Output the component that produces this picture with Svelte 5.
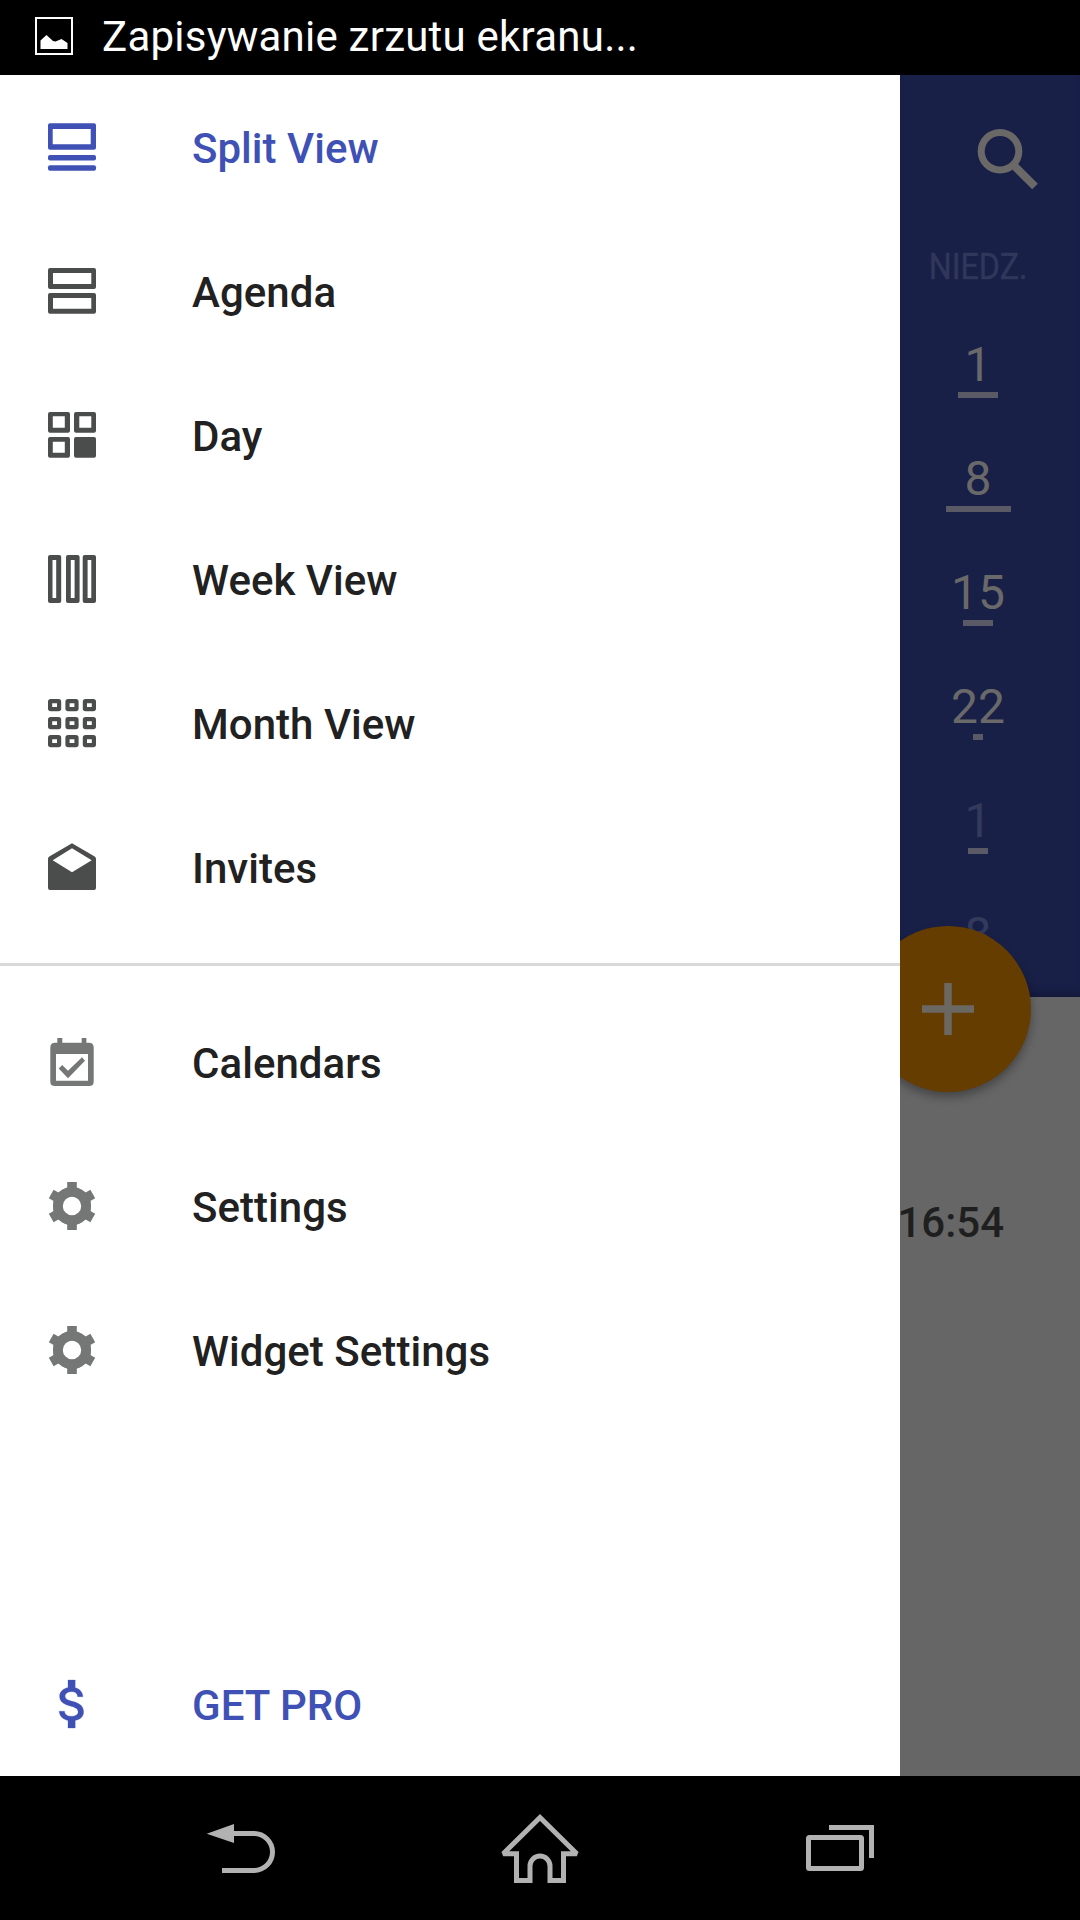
<script>
  const views = [
    { label: 'Split View', icon: 'split', active: true },
    { label: 'Agenda', icon: 'agenda' },
    { label: 'Day', icon: 'day' },
    { label: 'Week View', icon: 'week' },
    { label: 'Month View', icon: 'month' },
    { label: 'Invites', icon: 'invites' }
  ];
  const options = [
    { label: 'Calendars', icon: 'calendar' },
    { label: 'Settings', icon: 'gear' },
    { label: 'Widget Settings', icon: 'gear' }
  ];
  // load: width of the bar that shows how busy the day is
  const days = [
    { n: 1, load: 40 },
    { n: 8, load: 65 },
    { n: 15, load: 30 },
    { n: 22, load: 10 },
    { n: 1, load: 20, dim: true },
    { n: 8, load: 0, dim: true }
  ];
</script>

{#snippet glyph(name)}
  <svg class="icon" viewBox="0 0 72 72" fill="currentColor" fill-rule="evenodd">
    {#if name === 'split'}
      <path d="M14 12.3h44q2 0 2 2v22.4q0 2-2 2H14q-2 0-2-2V14.3q0-2 2-2zM16.7 18v15.3h38V18z" />
      <rect x="12" y="44" width="48" height="5.4" rx="2" />
      <rect x="12" y="54.2" width="48" height="5.6" rx="2" />
    {:else if name === 'agenda'}
      <path d="M14 13h44q2 0 2 2v17q0 2-2 2H14q-2 0-2-2V15q0-2 2-2zM17 18v11h38.3V18z" />
      <path d="M14 38h44q2 0 2 2v16.7q0 2-2 2H14q-2 0-2-2V40q0-2 2-2zM17 43v10.7h38.3V43z" />
    {:else if name === 'day'}
      <path d="M14 13h18q2 0 2 2v16.7q0 2-2 2H14q-2 0-2-2V15q0-2 2-2zM16.8 17.2v11.6h12V17.2z" />
      <path d="M40 13h18q2 0 2 2v16.7q0 2-2 2H40q-2 0-2-2V15q0-2 2-2zM43.3 17.2v11.6h12V17.2z" />
      <path d="M14 38h18q2 0 2 2v16.7q0 2-2 2H14q-2 0-2-2V40q0-2 2-2zM16.8 42.7v11h12v-11z" />
      <rect x="38" y="38" width="22" height="20.7" rx="2" />
    {:else if name === 'week'}
      <path d="M14 12h9.2q2 0 2 2v44q0 2-2 2H14q-2 0-2-2V14q0-2 2-2zM16.5 17v38h3.7V17z" />
      <path d="M32 12h9.6q2 0 2 2v44q0 2-2 2H32q-2 0-2-2V14q0-2 2-2zM34.8 17v38h3.8V17z" />
      <path d="M48.7 12H58q2 0 2 2v44q0 2-2 2h-9.3q-2 0-2-2V14q0-2 2-2zM51.6 17v38h3.7V17z" />
    {:else if name === 'month'}
      {#each [12, 30, 48] as y}
        {#each [12, 29.4, 46.8] as x}
          <rect x={x + 2.1} y={y + 2.1} width="9" height="8" rx=".6" fill="none" stroke="currentColor" stroke-width="4.2" stroke-linejoin="round" />
        {/each}
      {/each}
    {:else if name === 'invites'}
      <path d="M36 12.3L58.7 25.6q1.3.9 1.3 2.4v29q0 2-2 2H14q-2 0-2-2V28q0-1.5 1.3-2.4zM36 17.3L16.7 29.3 36 41.3l19.7-12z" />
    {:else if name === 'calendar'}
      <path d="M21.3 12h5v4.7h19.4V12h4.7v4.7H53q4.7 0 4.7 4.7v34q0 4.6-4.7 4.6H19q-4.7 0-4.7-4.6v-34q0-4.7 4.7-4.7h2.3zM20 28v26.7h32V28z" />
      <path d="M22.7 42.5l3.5-3.5 5.8 5.7 14-13.4 3 3.5L32 52.2z" />
    {:else if name === 'gear'}
      <circle cx="36" cy="36" r="14.1" fill="none" stroke="currentColor" stroke-width="9.8" />
      {#each [0, 60, 120, 180, 240, 300] as a}
        <path transform="rotate({a} 36 36)" d="M31.2 12h9.6v5.5l5 2.5-4 4H30.2l-4-4 5-2.5z" />
      {/each}
    {:else if name === 'dollar'}
      <g transform="translate(8 7.2) scale(2.4)" stroke="currentColor" stroke-width=".12">
        <path d="M11.8 10.9c-2.27-.59-3-1.2-3-2.15 0-1.09 1.01-1.85 2.7-1.85 1.78 0 2.44.85 2.5 2.1h2.21c-.07-1.72-1.12-3.3-3.21-3.81V2h-3v3.16c-1.94.42-3.5 1.68-3.5 3.61 0 2.31 1.91 3.46 4.7 4.13 2.5.6 3 1.48 3 2.41 0 .69-.49 1.79-2.7 1.79-2.06 0-2.87-.92-2.98-2.1h-2.2c.12 2.19 1.76 3.42 3.68 3.83V22h3v-3.15c1.95-.37 3.5-1.5 3.5-3.55 0-2.84-2.43-3.81-4.7-4.4z" />
      </g>
    {/if}
  </svg>
{/snippet}

{#snippet row(item)}
  <li class="row" class:active={item.active}>
    {@render glyph(item.icon)}
    <span class="label">{item.label}</span>
  </li>
{/snippet}

<div class="screen">
  <header class="status">
    <svg class="picture" viewBox="0 0 38 38">
      <rect x="1" y="1" width="36" height="36" fill="none" stroke="#fff" stroke-width="2" />
      <path d="M5.5 32v-8.5l6-5.5 6.5 6 2.5.5 6-2.500 6 4V32z" fill="#fff" />
    </svg>
    <span class="notice">Zapisywanie zrzutu ekranu...</span>
  </header>

  <main>
    <nav class="drawer">
      <ul>
        {#each views as item}{@render row(item)}{/each}
      </ul>
      <hr />
      <ul>
        {#each options as item}{@render row(item)}{/each}
      </ul>
      <ul class="bottom">
        {@render row({ label: 'GET PRO', icon: 'dollar', active: true })}
      </ul>
    </nav>

    <section class="behind">
      <div class="month">
        <svg class="search" viewBox="0 0 62 62">
          <circle cx="23" cy="23.3" r="18.8" fill="none" stroke="#6a6968" stroke-width="7" />
          <path d="M37.5 38L58 58.5" fill="none" stroke="#6a6968" stroke-width="8" />
        </svg>
        <div class="weekday"><span>NIEDZ.</span></div>
        {#each days as day}
          <div class="day" class:dim={day.dim}>
            <span>{day.n}</span>
            <i style:width="{day.load}px"></i>
          </div>
        {/each}
      </div>
      <div class="events"><span>16:54</span></div>
      <div class="fab">
        <svg viewBox="0 0 52 52"><path d="M0 26h52M26 0v52" stroke="#6b6762" stroke-width="7.5" /></svg>
      </div>
    </section>
  </main>

  <footer class="keys">
    <svg viewBox="0 0 80 80">
      <path d="M6.7 37.7L34 28v19z" fill="#b2b2b2" />
      <path d="M33 37.5h21a18.5 18.5 0 0 1 0 37H22" />
    </svg>
    <svg viewBox="0 0 80 80">
      <path d="M40 21.5L3.2 57.8h13.3v26.7H30V70a10 10 0 0 1 20 0v14.5h13.5V57.8h13.3z" />
    </svg>
    <svg viewBox="0 0 80 80">
      <rect x="8.5" y="41.5" width="53" height="31" rx="1" />
      <path d="M29 31.5h42.5V62" />
    </svg>
  </footer>
</div>

<style>
  :global(body) {
    margin: 0;
    background: #000;
  }
  .screen {
    width: 1080px;
    height: 1920px;
    display: flex;
    flex-direction: column;
    overflow: hidden;
    background: #000;
    font-family: Roboto, 'Noto Sans', sans-serif;
  }
  .status {
    height: 75px;
    display: flex;
    align-items: center;
    padding: 0 0 3px 35px;
    box-sizing: border-box;
    color: #fff;
  }
  .picture {
    width: 38px;
    height: 38px;
  }
  .notice {
    margin-left: 29px;
    font-size: 42px;
    letter-spacing: 0.23px;
    white-space: nowrap;
  }
  main {
    height: 1701px;
    display: flex;
  }
  .drawer {
    width: 900px;
    display: flex;
    flex-direction: column;
    background: #fff;
  }
  ul {
    margin: 0;
    padding: 0;
    list-style: none;
  }
  .bottom {
    margin-top: auto;
  }
  hr {
    width: 100%;
    height: 3px;
    margin: 24px 0;
    border: 0;
    background: #d9d9d9;
  }
  .row {
    height: 144px;
    display: flex;
    align-items: center;
    gap: 84px;
    padding-left: 36px;
    color: #4b4d4c;
  }
  hr + ul .row {
    color: #757776;
  }
  .icon {
    width: 72px;
    height: 72px;
    flex: none;
  }
  .row .label {
    padding-top: 3px;
    font-size: 42px;
    font-weight: 500;
    letter-spacing: 0.04px;
    color: #212121;
  }
  .row.active,
  .row.active .label {
    color: #3f51b5;
  }
  .behind {
    position: relative;
    width: 180px;
    display: flex;
    flex-direction: column;
    overflow: hidden;
    background: #666;
  }
  .month {
    height: 922px;
    display: flex;
    flex-direction: column;
    overflow: hidden;
    box-sizing: border-box;
    padding-top: 53px;
    background: #192048;
    box-shadow: inset 0 -10px 8px -6px #141939;
  }
  .search {
    width: 62px;
    height: 62px;
    flex: none;
    margin-left: 77px;
  }
  .weekday {
    height: 42px;
    flex: none;
    margin: 56px 0 52px;
    width: 156px;
    text-align: center;
    font-size: 36px;
    line-height: 42px;
    color: #30375a;
  }
  .weekday span {
    display: inline-block;
    transform: scaleX(0.895);
    -webkit-text-stroke: 0.4px #30375a;
  }
  .day {
    width: 156px;
    height: 114px;
    flex: none;
    display: flex;
    flex-direction: column;
    align-items: center;
    gap: 2px;
    font-size: 48px;
    line-height: 50px;
    color: #6a6969;
  }
  .day i {
    height: 6px;
    background: #5a5a66;
  }
  .day.dim {
    color: #333a5c;
  }
  .events {
    display: flex;
    justify-content: flex-end;
    padding: 201px 76px 0 0;
    font-size: 42px;
    font-weight: 500;
    line-height: 50px;
    color: #1f1f1f;
  }
  .fab {
    position: absolute;
    left: -35px;
    top: 851px;
    width: 166px;
    height: 166px;
    display: grid;
    place-items: center;
    border-radius: 50%;
    background: #663d00;
    box-shadow: 0 5px 10px rgba(0, 0, 0, 0.33);
  }
  .fab svg {
    width: 52px;
    height: 52px;
  }
  .keys {
    height: 144px;
    display: flex;
    gap: 220px;
    padding: 20px 0 0 200px;
    box-sizing: border-box;
  }
  .keys svg {
    width: 80px;
    height: 80px;
    overflow: visible;
    fill: none;
    stroke: #b2b2b2;
    stroke-width: 5;
    stroke-miterlimit: 2;
  }
  .keys path[fill] {
    fill: #b2b2b2;
    stroke: none;
  }
</style>
